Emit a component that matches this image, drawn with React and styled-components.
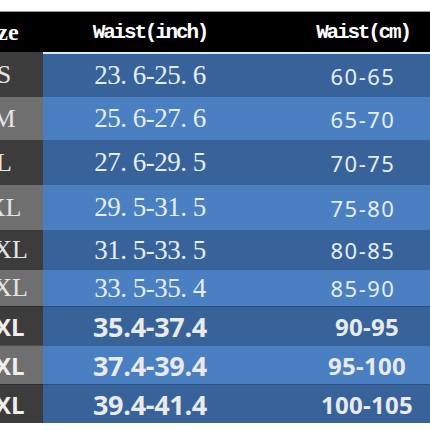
import React from "react";
import styled, { createGlobalStyle } from "styled-components";

const Global = createGlobalStyle`
  html, body { margin: 0; padding: 0; background: #ffffff; }
  body { width: 430px; height: 430px; overflow: hidden; }
`;

const Page = styled.div`
  width: 430px;
  height: 430px;
  overflow: hidden;
  padding-top: 11px;
  box-sizing: border-box;
  background: #ffffff;
`;

const Table = styled.div`
  display: grid;
  grid-template-columns: 82px 214px 212px;
  margin-left: -39px;
  width: 508px;
`;

const HeadCell = styled.div`
  height: 41px;
  background: #000000;
  border-top: 1px solid #9a9a9a;
  box-sizing: border-box;
  display: flex;
  align-items: center;
  justify-content: center;
  color: #ffffff;
  font-family: ${(p) =>
    p.$serif ? '"Liberation Serif", serif' : '"Liberation Mono", monospace'};
  font-weight: 700;
  font-size: ${(p) => (p.$serif ? 24 : 21)}px;
  letter-spacing: ${(p) => (p.$serif ? 0 : -2.2)}px;
  white-space: nowrap;
`;

const Label = styled.span`
  margin-left: ${(p) => p.$shift || 0}px;
`;

const SizeCell = styled.div`
  height: ${(p) => p.$h}px;
  box-sizing: border-box;
  background: ${(p) => (p.$light ? "#6f6f6f" : "#3c3c3c")};
  display: flex;
  align-items: center;
  justify-content: center;
  color: ${(p) => (p.$bold ? "#eeeeee" : "#e4e4e4")};
  font-family: ${(p) =>
    p.$bold ? '"Open Sans", "Noto Sans", sans-serif' : '"Liberation Serif", serif'};
  font-weight: ${(p) => (p.$bold ? 700 : 400)};
  font-size: ${(p) => (p.$bold ? 24 : 26)}px;
  padding-left: ${(p) => (p.$bold ? 2 : 4)}px;
  border-top: ${(p) => (p.$bold ? "1px solid rgba(0,0,0,0.25)" : "none")};
  white-space: nowrap;
`;

const ValueCell = styled.div`
  height: ${(p) => p.$h}px;
  box-sizing: border-box;
  background: ${(p) => (p.$light ? "#4a80c1" : "#37629a")};
  border-top: ${(p) =>
    p.$first ? "2px solid #dfe7f0" : p.$bold ? "1px solid rgba(0,0,0,0.22)" : "none"};
  display: flex;
  align-items: center;
  justify-content: center;
  padding-left: ${(p) => p.$shift || 0}px;
  white-space: nowrap;
  color: ${(p) => (p.$bold ? "#e9eaec" : "#e6eefa")};
`;

const InchText = styled.span`
  font-family: "Liberation Serif", serif;
  font-size: 27px;
  letter-spacing: -0.5px;
`;

const CmText = styled.span`
  font-family: "Noto Sans", sans-serif;
  font-weight: 400;
  font-size: 22px;
  letter-spacing: 1.5px;
`;

const BoldText = styled.span`
  font-family: "Open Sans", "Noto Sans", sans-serif;
  font-weight: 700;
  font-size: ${(p) => p.$size}px;
  letter-spacing: ${(p) => p.$ls}px;
`;

const rows = [
  { size: "S", inch: "23. 6-25. 6", cm: "60-65", h: 45 },
  { size: "M", inch: "25. 6-27. 6", cm: "65-70", h: 43 },
  { size: "L", inch: "27. 6-29. 5", cm: "70-75", h: 45 },
  { size: "XL", inch: "29. 5-31. 5", cm: "75-80", h: 45 },
  { size: "2XL", inch: "31. 5-33. 5", cm: "80-85", h: 40 },
  { size: "3XL", inch: "33. 5-35. 4", cm: "85-90", h: 36 },
  { size: "4XL", inch: "35.4-37.4", cm: "90-95", h: 39, bold: true },
  { size: "5XL", inch: "37.4-39.4", cm: "95-100", h: 39, bold: true },
  { size: "6XL", inch: "39.4-41.4", cm: "100-105", h: 39, bold: true },
];

export default function App() {
  return (
    <>
      <Global />
      <Page>
        <Table>
          <HeadCell $serif>
            <Label $shift={-8}>Size</Label>
          </HeadCell>
          <HeadCell>Waist(inch)</HeadCell>
          <HeadCell>Waist(cm)</HeadCell>
          {rows.map((r, i) => {
            const light = i % 2 === 1;
            return (
              <React.Fragment key={r.size}>
                <SizeCell $h={r.h} $light={light} $bold={r.bold}>
                  {r.size}
                </SizeCell>
                <ValueCell $h={r.h} $light={light} $bold={r.bold} $first={i === 0}>
                  {r.bold ? (
                    <BoldText $size={27} $ls={-0.3}>{r.inch}</BoldText>
                  ) : (
                    <InchText>{r.inch}</InchText>
                  )}
                </ValueCell>
                <ValueCell
                  $h={r.h}
                  $light={light}
                  $bold={r.bold}
                  $first={i === 0}
                  $shift={r.bold ? 8 : 0}
                >
                  {r.bold ? (
                    <BoldText $size={24} $ls={0.3}>{r.cm}</BoldText>
                  ) : (
                    <CmText>{r.cm}</CmText>
                  )}
                </ValueCell>
              </React.Fragment>
            );
          })}
        </Table>
      </Page>
    </>
  );
}
